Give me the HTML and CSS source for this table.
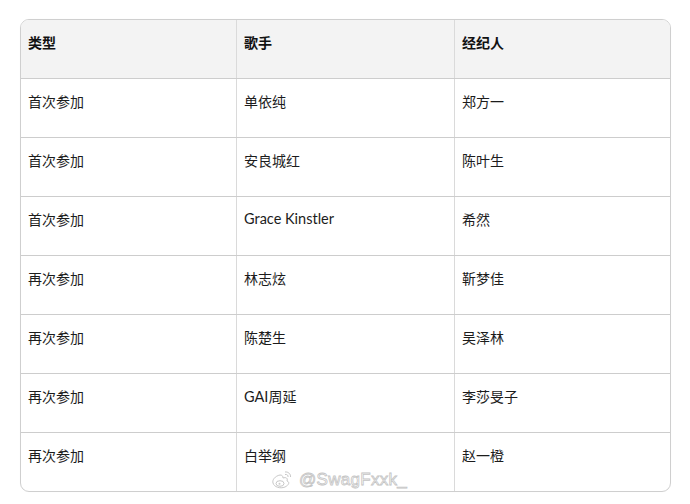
FILE: index.html
```html
<!DOCTYPE html>
<html lang="zh">
<head>
<meta charset="utf-8">
<link rel="stylesheet" href="styles.css">
</head>
<body>
<div class="page">
  <div class="table">
    <div class="row head">
      <div class="cell">类型</div>
      <div class="cell">歌手</div>
      <div class="cell">经纪人</div>
    </div>
    <div class="row">
      <div class="cell">首次参加</div>
      <div class="cell">单依纯</div>
      <div class="cell">郑方一</div>
    </div>
    <div class="row">
      <div class="cell">首次参加</div>
      <div class="cell">安良城红</div>
      <div class="cell">陈叶生</div>
    </div>
    <div class="row">
      <div class="cell">首次参加</div>
      <div class="cell latin">Grace Kinstler</div>
      <div class="cell">希然</div>
    </div>
    <div class="row">
      <div class="cell">再次参加</div>
      <div class="cell">林志炫</div>
      <div class="cell">靳梦佳</div>
    </div>
    <div class="row">
      <div class="cell">再次参加</div>
      <div class="cell">陈楚生</div>
      <div class="cell">吴泽林</div>
    </div>
    <div class="row">
      <div class="cell">再次参加</div>
      <div class="cell"><span class="latin">GAI</span>周延</div>
      <div class="cell">李莎旻子</div>
    </div>
    <div class="row last">
      <div class="cell">再次参加</div>
      <div class="cell">白举纲</div>
      <div class="cell">赵一橙</div>
    </div>
  </div>
  <div class="watermark">
    <svg class="wb" width="22" height="20" viewBox="0 0 22 20">
      <path d="M9 5 C4 6 1 10 2 13 C3 17 9 19 14 17 C18 15 19 12 16 11 C17 8 15 7 12 8 C12 6 11 5 9 5 Z" fill="#fff" stroke="#c8c8c8" stroke-width="1"/>
      <ellipse cx="9" cy="13.5" rx="4" ry="2.8" fill="none" stroke="#c8c8c8" stroke-width="1"/>
      <circle cx="8.5" cy="13.8" r="1" fill="#ccc"/>
      <path d="M14 2 C17 1.5 20 4 19.5 7" fill="none" stroke="#c8c8c8" stroke-width="1"/>
      <path d="M14 4.5 C16 4 17.5 5.5 17 7" fill="none" stroke="#c8c8c8" stroke-width="1"/>
    </svg>
    <span class="wm-text">@SwagFxxk_</span>
  </div>
</div>
</body>
</html>
```
FILE: styles.css
```css
html, body {
  margin: 0;
  padding: 0;
  background: #ffffff;
}
.page {
  position: relative;
  width: 690px;
  height: 504px;
  padding: 19px 0 0 20px;
  box-sizing: border-box;
  font-family: "Noto Sans CJK SC", "Noto Sans", sans-serif;
}
.table {
  width: 651px;
  border: 1px solid #cfcfcf;
  border-radius: 9px;
  overflow: hidden;
  box-sizing: border-box;
  box-shadow: 0 0 1px rgba(0,0,0,0.05);
}
.row {
  display: grid;
  grid-template-columns: 216px 218px 1fr;
  height: 59px;
  border-bottom: 1px solid #cdcdcd;
  box-sizing: border-box;
}
.row.last {
  border-bottom: none;
  height: 58px;
}
.row.head {
  background: #f3f3f3;
  font-weight: 700;
}
.cell {
  padding: 11px 0 0 7px;
  font-size: 14px;
  line-height: 22px;
  color: #1c1c1c;
  border-right: 1px solid #dadada;
}
.cell:last-child {
  border-right: none;
}
.head .cell {
  color: #111;
}
.latin {
  font-family: "Lato", "Noto Sans", sans-serif;
  font-size: 14.5px;
}
.watermark {
  position: absolute;
  left: 271px;
  top: 470px;
  display: flex;
  align-items: center;
  gap: 6px;
}
.wm-text {
  font-family: "Liberation Sans", sans-serif;
  font-size: 17px;
  color: #ffffff;
  -webkit-text-stroke: 0.8px #c4c4c4;
  letter-spacing: 0.3px;
}
```
